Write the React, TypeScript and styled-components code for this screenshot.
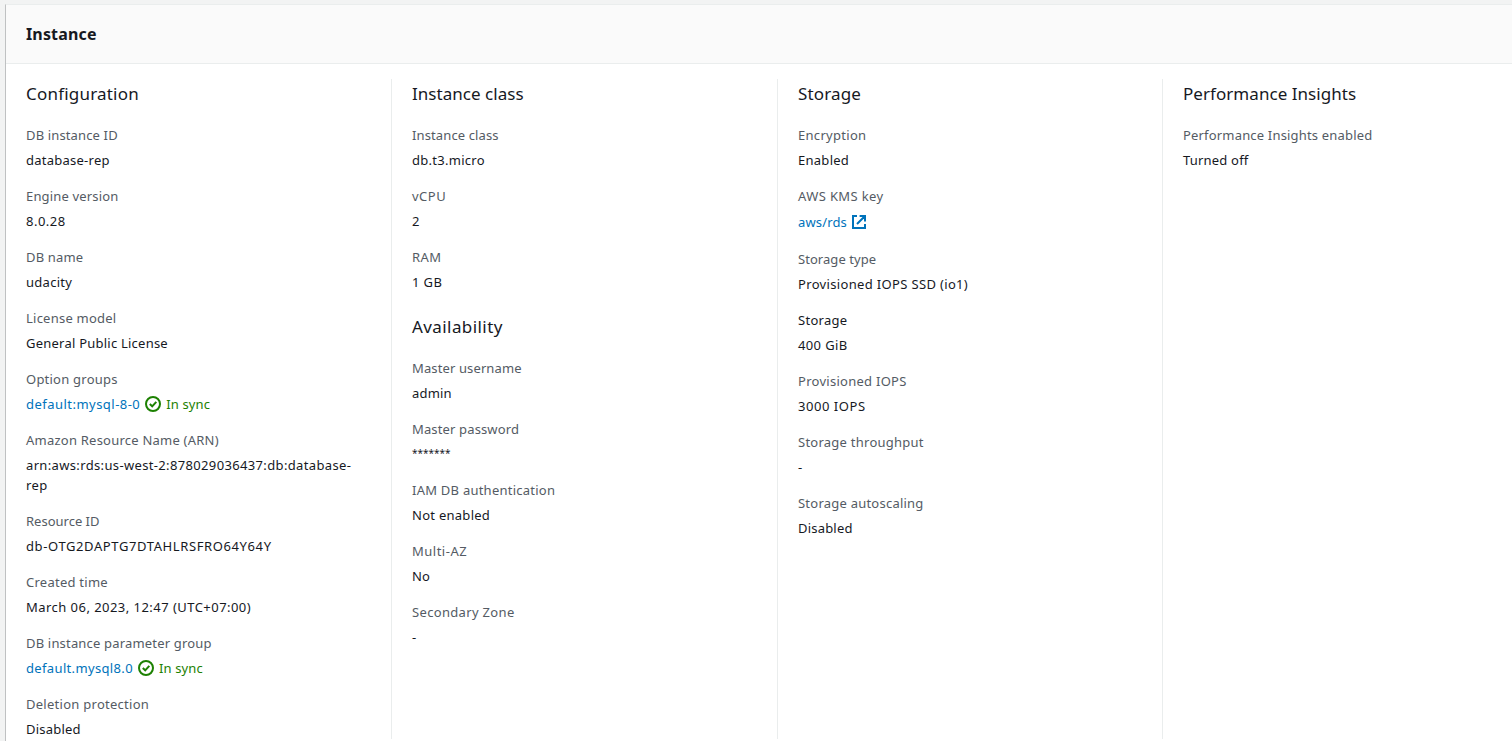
import React from "react";
import styled, { createGlobalStyle } from "styled-components";

const GlobalStyle = createGlobalStyle`
  * { box-sizing: border-box; }
  html, body { margin: 0; height: 100%; overflow: hidden; background: #f2f3f3; }
  body {
    font-family: "Noto Sans", "Open Sans", sans-serif;
    font-size: 13px;
    line-height: 20px;
    color: #16191f;
  }
`;

const Page = styled.main`
  height: 741px;
  padding: 4px 0 0 5px;
  overflow: hidden;
`;

const Panel = styled.section`
  height: 737px;
  background: #fff;
  border-top: 1px solid #eaeded;
  border-left: 1px solid #bfc1c2;
`;

const PanelHeader = styled.header`
  height: 59px;
  padding: 18px 20px 0;
  background: #fafafa;
  border-bottom: 1px solid #eaeded;
`;

const Title = styled.h2`
  margin: 0;
  font-size: 16px;
  line-height: 22px;
  font-weight: 700;
  letter-spacing: 0.15px;
`;

const Columns = styled.div`
  display: grid;
  grid-template-columns: 385px 386px 385px 386px;
  height: 675px;
  padding-top: 15px;
`;

const Column = styled.div`
  padding: 4px 20px 0;
  & + & { border-left: 1px solid #eaeded; }
`;

const Group = styled.div`
  & + & { margin-top: 24px; }
`;

const Heading = styled.h3<{ $track?: number }>`
  margin: 0 0 20px;
  font-size: 17px;
  line-height: 22px;
  font-weight: 400;
  letter-spacing: ${(p) => p.$track ?? 0}px;
`;

const Fields = styled.dl`
  display: flex;
  flex-direction: column;
  gap: 16px;
  margin: 0;
`;

const Label = styled.dt<{ $dark?: boolean; $track?: number }>`
  margin-bottom: 5px;
  color: ${(p) => (p.$dark ? "#16191f" : "#545b64")};
  letter-spacing: ${(p) => p.$track ?? 0}px;
  white-space: nowrap;
`;

const Value = styled.dd<{ $tall?: boolean; $track?: number }>`
  display: flex;
  align-items: center;
  min-height: ${(p) => (p.$tall ? 22 : 20)}px;
  margin: 0;
  letter-spacing: ${(p) => p.$track ?? 0}px;
  white-space: pre-line;
`;

const Link = styled.a`
  color: #0073bb;
  text-decoration: none;
`;

const Masked = styled.span`
  font-size: 10px;
  line-height: 18px;
  padding-bottom: 2px;
`;

const Status = styled.span`
  display: inline-flex;
  align-items: center;
  gap: 5px;
  margin-left: 5px;
  color: #1d8102;
  letter-spacing: 0.12px;
`;

const Icon = styled.svg`
  display: block;
  flex: none;
  width: 16px;
  height: 16px;
  fill: none;
  stroke: currentColor;
  stroke-width: 2;
`;

const ExternalIcon = styled(Icon)`
  margin-left: 4px;
  color: #0073bb;
`;

type Field = {
  label: string;
  value: string;
  lt?: number;
  vt?: number;
  kind?: "sync" | "external" | "masked";
  dark?: boolean;
};
type GroupData = { title: string; track?: number; fields: Field[] };

const columns: GroupData[][] = [
  [
    {
      title: "Configuration",
      track: 0.2,
      fields: [
        { label: "DB instance ID", lt: 0.14, value: "database-rep", vt: 0.25 },
        { label: "Engine version", lt: 0.16, value: "8.0.28", vt: 0.5 },
        { label: "DB name", lt: 0.16, value: "udacity", vt: 0.28 },
        { label: "License model", lt: 0.23, value: "General Public License", vt: 0.23 },
        { label: "Option groups", lt: 0.23, value: "default:mysql-8-0", vt: 0.47, kind: "sync" },
        { label: "Amazon Resource Name (ARN)", lt: 0.23, value: "arn:aws:rds:us-west-2:878029036437:db:database-\nrep", vt: 0.35 },
        { label: "Resource ID", value: "db-OTG2DAPTG7DTAHLRSFRO64Y64Y", vt: 0.61 },
        { label: "Created time", lt: 0.25, value: "March 06, 2023, 12:47 (UTC+07:00)", vt: 0.46 },
        { label: "DB instance parameter group", lt: 0.18, value: "default.mysql8.0", vt: 0.35, kind: "sync" },
        { label: "Deletion protection", lt: 0.27, value: "Disabled", vt: 0.22 },
      ],
    },
  ],
  [
    {
      title: "Instance class",
      track: 0.03,
      fields: [
        { label: "Instance class", lt: 0.12, value: "db.t3.micro", vt: 0.27 },
        { label: "vCPU", lt: 0.5, value: "2" },
        { label: "RAM", lt: 0.4, value: "1 GB", vt: 0.4 },
      ],
    },
    {
      title: "Availability",
      track: 0.42,
      fields: [
        { label: "Master username", lt: 0.12, value: "admin", vt: 0.2 },
        { label: "Master password", lt: 0.14, value: "*******", kind: "masked" },
        { label: "IAM DB authentication", lt: 0.24, value: "Not enabled", vt: 0.27 },
        { label: "Multi-AZ", lt: 0.5, value: "No", vt: 0.2 },
        { label: "Secondary Zone", lt: 0.33, value: "-" },
      ],
    },
  ],
  [
    {
      title: "Storage",
      track: 0.15,
      fields: [
        { label: "Encryption", lt: 0.3, value: "Enabled", vt: 0.27 },
        { label: "AWS KMS key", lt: 0.38, value: "aws/rds", vt: 0.14, kind: "external" },
        { label: "Storage type", lt: 0.05, value: "Provisioned IOPS SSD (io1)", vt: 0.34 },
        { label: "Storage", lt: 0.28, value: "400 GiB", vt: 0.36, dark: true },
        { label: "Provisioned IOPS", lt: 0.27, value: "3000 IOPS", vt: 0.55 },
        { label: "Storage throughput", lt: 0.25, value: "-" },
        { label: "Storage autoscaling", lt: 0.23, value: "Disabled", vt: 0.2 },
      ],
    },
  ],
  [
    {
      title: "Performance Insights",
      track: 0.05,
      fields: [{ label: "Performance Insights enabled", lt: 0.18, value: "Turned off", vt: 0.2 }],
    },
  ],
];

function FieldValue({ field }: { field: Field }) {
  switch (field.kind) {
    case "sync":
      return (
        <>
          <Link>{field.value}</Link>
          <Status>
            <Icon viewBox="0 0 16 16">
              <circle cx="8" cy="8" r="7" />
              <path d="M4.8 8.1 7.2 10.3 11.3 5.8" />
            </Icon>
            In sync
          </Status>
        </>
      );
    case "external":
      return (
        <>
          <Link>{field.value}</Link>
          <ExternalIcon viewBox="0 0 16 16">
            <path d="M6 2H2v12h12v-4M8.6 2H14v5.4M14 2 6 10" />
          </ExternalIcon>
        </>
      );
    case "masked":
      return <Masked>{field.value}</Masked>;
    default:
      return <>{field.value}</>;
  }
}

function FieldItem({ field }: { field: Field }) {
  return (
    <div>
      <Label $dark={field.dark} $track={field.lt}>{field.label}</Label>
      <Value $tall={field.kind === "external"} $track={field.vt}>
        <FieldValue field={field} />
      </Value>
    </div>
  );
}

export default function App() {
  return (
    <>
      <GlobalStyle />
      <Page>
        <Panel>
          <PanelHeader>
            <Title>Instance</Title>
          </PanelHeader>
          <Columns>
            {columns.map((groups, i) => (
              <Column key={i}>
                {groups.map((group) => (
                  <Group key={group.title}>
                    <Heading $track={group.track}>{group.title}</Heading>
                    <Fields>
                      {group.fields.map((field) => (
                        <FieldItem key={field.label} field={field} />
                      ))}
                    </Fields>
                  </Group>
                ))}
              </Column>
            ))}
          </Columns>
        </Panel>
      </Page>
    </>
  );
}
